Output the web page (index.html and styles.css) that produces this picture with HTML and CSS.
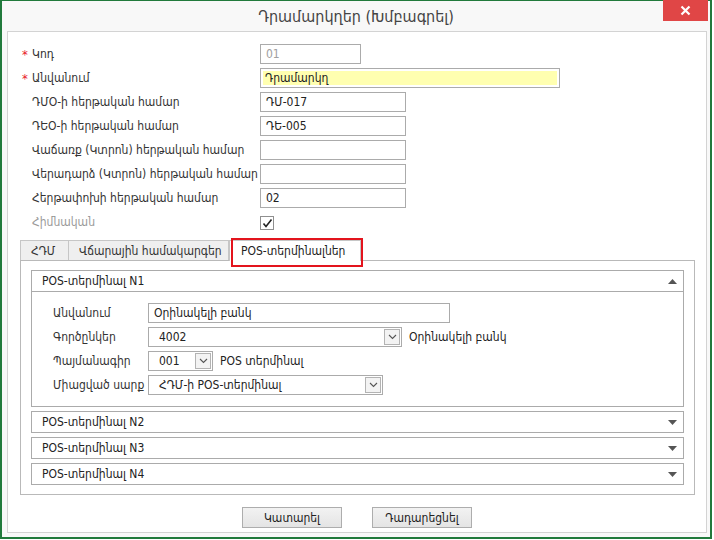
FILE: index.html
```html
<!DOCTYPE html>
<html lang="hy">
<head>
<meta charset="utf-8">
<title>Դրամարկղեր</title>
<link rel="stylesheet" href="styles.css">
</head>
<body>
<div class="window">
  <div class="titlebar">
    <span class="title">Դրամարկղեր (Խմբագրել)</span>
    <div class="close"><svg width="11" height="11" viewBox="0 0 11 11"><path d="M1.5 1.5 L9.5 9.5 M9.5 1.5 L1.5 9.5" stroke="#fff" stroke-width="2.2"/></svg></div>
  </div>
  <div class="panel">
    <div class="form">
      <div class="label"><span class="star">*</span>Կոդ</div>
      <div class="field"><div class="inp w-code muted">01</div></div>
      <div class="label"><span class="star">*</span>Անվանում</div>
      <div class="field"><div class="inp w-name yellow">Դրամարկղ</div></div>
      <div class="label"><span class="star"></span>ԴՄՕ-ի հերթական համար</div>
      <div class="field"><div class="inp w-mid">ԴՄ-017</div></div>
      <div class="label"><span class="star"></span>ԴԵՕ-ի հերթական համար</div>
      <div class="field"><div class="inp w-mid">ԴԵ-005</div></div>
      <div class="label"><span class="star"></span>Վաճառք (Կտրոն) հերթական համար</div>
      <div class="field"><div class="inp w-mid"></div></div>
      <div class="label"><span class="star"></span>Վերադարձ (Կտրոն) հերթական համար</div>
      <div class="field"><div class="inp w-mid"></div></div>
      <div class="label"><span class="star"></span>Հերթափոխի հերթական համար</div>
      <div class="field"><div class="inp w-mid">02</div></div>
      <div class="label disabled"><span class="star"></span>Հիմնական</div>
      <div class="field"><div class="check"><svg width="11" height="11" viewBox="0 0 11 11"><path d="M1.5 5.5 L4 8.5 L9.5 1.5" fill="none" stroke="#222" stroke-width="1.6"/></svg></div></div>
    </div>

    <div class="tabs">
      <div class="tabstrip">
        <div class="tab t1">ՀԴՄ</div>
        <div class="tab t2">Վճարային համակարգեր</div>
        <div class="tab active">POS-տերմինալներ<span class="highlight"></span></div>
      </div>
      <div class="tabpanel">
        <div class="acc">
          <div class="acc-head"><span>POS-տերմինալ N1</span><svg class="arrow" width="9" height="5" viewBox="0 0 9 5"><path d="M0 5 L4.5 0 L9 5 Z" fill="#555"/></svg></div>
          <div class="acc-body">
            <div class="blabel">Անվանում</div>
            <div class="field"><div class="inp w-bname">Օրինակելի բանկ</div></div>
            <div class="blabel">Գործընկեր</div>
            <div class="field"><div class="sel w-s1"><span class="sel-text">4002</span><span class="dd"><svg width="9" height="6" viewBox="0 0 9 6"><path d="M1 1 L4.5 4.5 L8 1" fill="none" stroke="#555" stroke-width="1.1"/></svg></span></div><span class="aside">Օրինակելի բանկ</span></div>
            <div class="blabel">Պայմանագիր</div>
            <div class="field"><div class="sel w-s2"><span class="sel-text">001</span><span class="dd"><svg width="9" height="6" viewBox="0 0 9 6"><path d="M1 1 L4.5 4.5 L8 1" fill="none" stroke="#555" stroke-width="1.1"/></svg></span></div><span class="aside">POS տերմինալ</span></div>
            <div class="blabel">Միացված սարք</div>
            <div class="field"><div class="sel w-s3"><span class="sel-text">ՀԴՄ-ի POS-տերմինալ</span><span class="dd"><svg width="9" height="6" viewBox="0 0 9 6"><path d="M1 1 L4.5 4.5 L8 1" fill="none" stroke="#555" stroke-width="1.1"/></svg></span></div></div>
          </div>
        </div>
        <div class="acc">
          <div class="acc-head"><span>POS-տերմինալ N2</span><svg class="arrow" width="9" height="5" viewBox="0 0 9 5"><path d="M0 0 L4.5 5 L9 0 Z" fill="#555"/></svg></div>
        </div>
        <div class="acc">
          <div class="acc-head"><span>POS-տերմինալ N3</span><svg class="arrow" width="9" height="5" viewBox="0 0 9 5"><path d="M0 0 L4.5 5 L9 0 Z" fill="#555"/></svg></div>
        </div>
        <div class="acc">
          <div class="acc-head"><span>POS-տերմինալ N4</span><svg class="arrow" width="9" height="5" viewBox="0 0 9 5"><path d="M0 0 L4.5 5 L9 0 Z" fill="#555"/></svg></div>
        </div>
      </div>
    </div>

    <div class="buttons">
      <div class="btn">Կատարել</div>
      <div class="btn">Դադարեցնել</div>
    </div>
  </div>
</div>
</body>
</html>
```
FILE: styles.css
```css
* { box-sizing: border-box; }
html, body { margin: 0; padding: 0; background: #fff; }
body {
  font-family: "DejaVu Sans Condensed", "DejaVu Sans", sans-serif;
  font-size: 12px;
  color: #333;
}
.window {
  width: 712px;
  height: 539px;
  border: 2px solid #217a3c;
  border-top-width: 1px;
  background: #f8f8f8;
  display: flex;
  flex-direction: column;
  position: relative;
}
.titlebar {
  height: 30px;
  display: flex;
  align-items: center;
  justify-content: center;
  font-size: 16px;
  color: #444;
  padding-top: 1px;
}
.close {
  position: absolute;
  top: -1px;
  right: 2px;
  width: 45px;
  height: 21px;
  background: #e04646;
  display: flex;
  align-items: center;
  justify-content: center;
}
.panel {
  flex: 1;
  margin: 0 3px 4px 5px;
  border: 1px solid #d3d3d3;
  background: #fff;
  display: flex;
  flex-direction: column;
}
.form {
  margin-top: 12px;
  padding-left: 14px;
  display: grid;
  grid-template-columns: 238px auto;
  grid-auto-rows: 20px;
  row-gap: 4px;
}
.label {
  display: flex;
  align-items: center;
  white-space: nowrap;
  color: #333;
}
.label.disabled { color: #9a9a9a; }
.star {
  width: 10px;
  color: #e8202a;
  font-size: 13px;
  line-height: 1;
  flex: none;
}
.field {
  display: flex;
  align-items: center;
}
.inp {
  height: 20px;
  border: 1px solid #ababab;
  background: #fff;
  padding: 0 5px;
  display: flex;
  align-items: center;
  white-space: nowrap;
  color: #222;
}
.inp.muted { color: #a0a0a0; }
.inp.yellow {
  background: #ffffb0;
  box-shadow: inset 0 0 0 2px #fff;
  padding-left: 4px;
}
.w-code { width: 101px; }
.w-name { width: 300px; }
.w-mid { width: 146px; }
.w-bname { width: 302px; }
.check {
  width: 14px;
  height: 14px;
  border: 1px solid #8f8f8f;
  background: #fff;
  display: flex;
  align-items: center;
  justify-content: center;
  margin-top: 2px;
}

.tabs {
  margin: 8px 11px 0 12px;
}
.tabstrip {
  display: flex;
  height: 20px;
}
.tab {
  height: 20px;
  border: 1px solid #c6c6c6;
  border-bottom: none;
  background: #efefef;
  display: flex;
  align-items: center;
  padding-left: 10px;
  white-space: nowrap;
  color: #333;
}
.t1 { width: 49px; }
.t2 { width: 161px; margin-left: -1px; }
.tab.active {
  width: 132px;
  margin-left: 0;
  background: #fff;
  position: relative;
  padding-left: 11px;
  color: #222;
  height: 21px;
}
.highlight {
  position: absolute;
  left: 1px;
  top: -3px;
  width: 132px;
  height: 29px;
  border: 2px solid #e3141d;
}
.tabpanel {
  border: 1px solid #b9b9b9;
  background: #fff;
  padding: 9px 10px 9px 10px;
  display: flex;
  flex-direction: column;
  gap: 4px;
}
.acc {
  border: 1px solid #ababab;
}
.acc-head {
  height: 20px;
  display: flex;
  align-items: center;
  justify-content: space-between;
  padding: 0 6px 0 10px;
  color: #222;
}
.acc-body {
  border-top: 1px solid #ababab;
  padding: 11px 0 11px 21px;
  display: grid;
  grid-template-columns: 95px auto;
  grid-auto-rows: 20px;
  row-gap: 4px;
}
.blabel {
  display: flex;
  align-items: center;
  white-space: nowrap;
  color: #333;
}
.sel {
  height: 20px;
  border: 1px solid #ababab;
  display: flex;
  align-items: center;
  justify-content: space-between;
  padding: 0 1px 0 10px;
  white-space: nowrap;
  color: #222;
}
.w-s1 { width: 254px; }
.w-s2 { width: 65px; }
.w-s3 { width: 235px; }
.dd {
  width: 16px;
  height: 16px;
  border: 1px solid #b3b3b3;
  background: #f3f3f3;
  display: flex;
  align-items: center;
  justify-content: center;
}
.aside {
  margin-left: 7px;
  white-space: nowrap;
  color: #222;
}

.buttons {
  margin-top: 12px;
  display: flex;
  justify-content: center;
  gap: 30px;
}
.btn {
  width: 100px;
  height: 21px;
  border: 1px solid #adadad;
  background: linear-gradient(#f2f2f2, #e4e4e4);
  display: flex;
  align-items: center;
  justify-content: center;
  color: #222;
}
```
